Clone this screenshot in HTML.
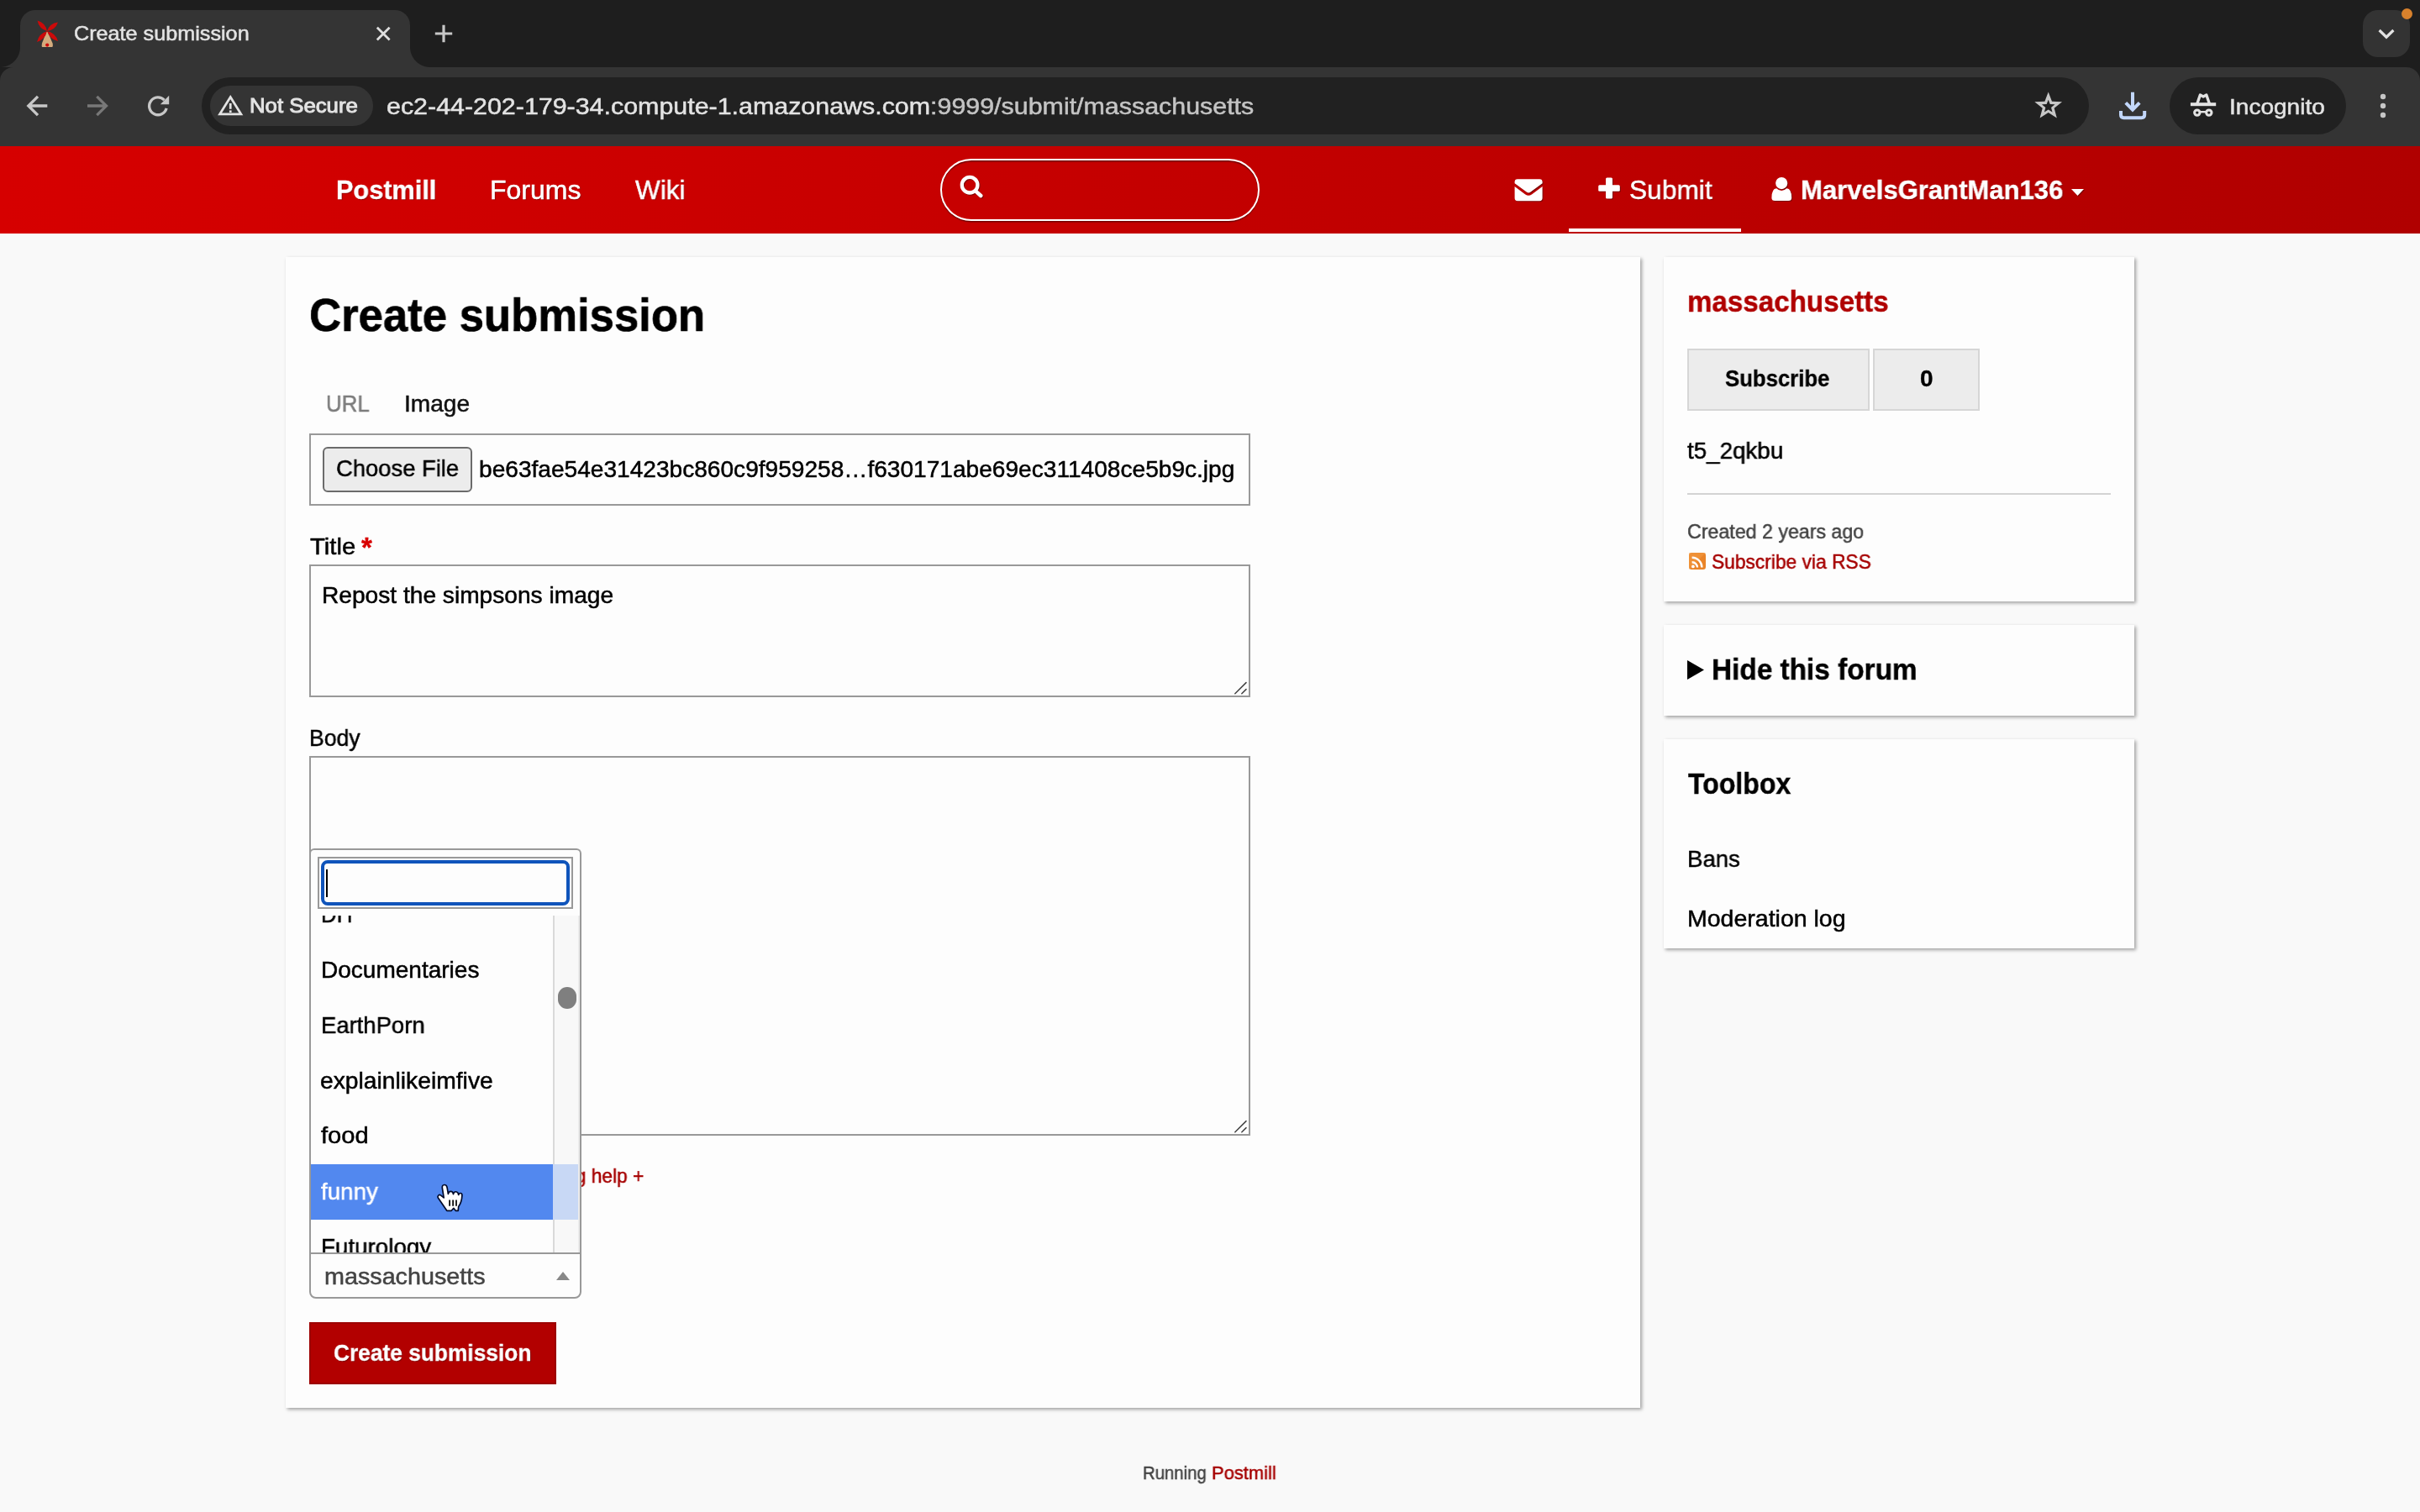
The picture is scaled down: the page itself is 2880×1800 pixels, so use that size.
<!DOCTYPE html>
<html lang="en">
<head>
<meta charset="utf-8">
<title>Create submission</title>
<style>
html,body{margin:0;padding:0}
@media (max-width:1600px){html{zoom:.5}}
body{width:2880px;height:1800px;position:relative;overflow:hidden;background:#f9f9f9;
  font-family:"Liberation Sans",sans-serif;}
.t{position:absolute;transform-origin:0 0;will-change:transform;-webkit-text-stroke:.5px;margin:0;padding:0;line-height:1;white-space:nowrap;font-weight:400;
  font-family:"Liberation Sans",sans-serif;border:0;background:none}
.dim{color:#c4c4c4}
.sh{text-shadow:1px 1px 1px rgba(80,0,0,.6)}
.b{position:absolute;box-sizing:border-box}
svg{position:absolute;overflow:visible}
/* ---------- browser chrome ---------- */
#tabstrip{left:0;top:0;width:2880px;height:100px;background:#1e1e1e}
#toolbar{left:0;top:80px;width:2880px;height:94px;background:#343434;border-radius:16px 16px 0 0}
#tab{left:24px;top:12px;width:464px;height:68px;background:#343434;border-radius:18px 18px 0 0}
#tab:before,#tab:after{content:"";position:absolute;bottom:0;width:24px;height:24px}
#tab:before{left:-24px;background:radial-gradient(circle at 0 0,transparent 23.5px,#343434 24.5px)}
#tab:after{right:-24px;background:radial-gradient(circle at 100% 0,transparent 23.5px,#343434 24.5px)}
#tabsearch{left:2812px;top:12px;width:56px;height:56px;border-radius:18px;background:#333}
#dot{left:2857.5px;top:9.5px;width:13px;height:13px;border-radius:50%;background:#d8812c}
#omni{left:240px;top:92px;width:2246px;height:68px;border-radius:34px;background:#212121}
#chip{left:250px;top:102px;width:194px;height:48px;border-radius:24px;background:#343434}
#incog{left:2582px;top:92px;width:210px;height:68px;border-radius:34px;background:#212121}
/* ---------- site header ---------- */
#site{left:0;top:174px;width:2880px;height:104px;background:linear-gradient(90deg,#d60000,#b00000)}
#search{left:1119px;top:189px;width:380px;height:74px;border:2px solid #fff;border-radius:37px;
  box-shadow:0 1.5px 1px rgba(60,0,0,.6),inset 0 1.5px 1px rgba(60,0,0,.6)}
#active{left:1867px;top:272px;width:205px;height:4px;background:#fff}
/* ---------- cards ---------- */
.card{background:#fdfdfd;box-shadow:2px 2px 4px rgba(0,0,0,.36)}
#main{left:340px;top:306px;width:1612px;height:1370px}
#side1{left:1980px;top:306px;width:560px;height:410px}
#side2{left:1980px;top:744px;width:560px;height:108px}
#side3{left:1980px;top:880px;width:560px;height:249px}
.field{border:2px solid #999;background:#fdfdfd}
#filebox{left:368px;top:516px;width:1120px;height:86px}
#filebtn{left:384px;top:532px;width:178px;height:54px;border:2px solid #6b6b6b;border-radius:6px;background:#ececec}
#titlebox{left:368px;top:672px;width:1120px;height:158px}
#bodybox{left:368px;top:900px;width:1120px;height:452px}
#submitbtn{left:368px;top:1574px;width:294px;height:74px;background:#b20000;border:2px solid #9c0000}
/* dropdown */
#dd{left:368px;top:1010px;width:324px;height:483px;border:2px solid #999;border-bottom:0;border-radius:6px 6px 0 0;background:#fdfdfd}
#ddsearch{left:378px;top:1020px;width:304px;height:62px;border:2px solid #999;background:#fdfdfd}
#ddfocus{left:382px;top:1024px;width:296px;height:54px;border:4px solid #0f54bb;border-radius:8px;background:#fdfdfd}
#caret{left:388px;top:1035px;width:2px;height:33px;background:#000}
#hl{left:370px;top:1386px;width:288px;height:66px;background:#5288ef}
#hl2{left:658px;top:1386px;width:30px;height:66px;background:#c8d8f5}
#track{left:658px;top:1090px;width:32px;height:401px;background:#f8f8f8;border-left:2px solid #d9d9d9;border-right:2px solid #ebebeb}
#thumb{left:664px;top:1175px;width:22px;height:26px;border-radius:11px;background:#7f7f7f}
#selbox{left:368px;top:1491px;width:324px;height:55px;border:2px solid #999;border-radius:0 0 8px 8px;background:#fdfdfd}
#optclip{left:371px;top:1090px;width:287px;height:401px;overflow:hidden}
#optclip .t{margin-left:-371px;margin-top:-1090px}
/* sidebar */
.sbtn{background:#ececec;border:2px solid #d6d6d6}
#subbtn{left:2008px;top:415px;width:217px;height:74px}
#subcnt{left:2229px;top:415px;width:127px;height:74px}
#hr{left:2008px;top:587px;width:504px;height:2px;background:#d3d3d3}
</style>
</head>
<body>
<!-- ======= browser window chrome ======= -->
<div id="browser">
  <div class="b" id="tabstrip"></div>
  <div class="b" id="toolbar"></div>
  <div class="b" id="tab"></div>
  <svg style="left:40px;top:20px" width="34" height="40" viewBox="40 20 34 40" ><path d="M55.2 38 L56.8 38 L62.6 51.5 Q63.4 56 61.8 56 L50.4 56 Q49.2 56 50 51.5Z" fill="#d4ab7d"/><path d="M56 37 Q54.1 27.2 44.5 24.5 Q46.4 34.3 56 37Z" fill="#cc0a0a"/><path d="M56 37 Q65.8 35.8 69 26.5 Q59.2 27.7 56 37Z" fill="#cc0a0a"/><path d="M56 37 Q46.2 40.0 44 50 Q53.8 47.0 56 37Z" fill="#cc0a0a"/><path d="M56 37 Q59.0 46.8 69 49 Q66.0 39.2 56 37Z" fill="#cc0a0a"/><circle cx="56.2" cy="53.6" r="2.1" fill="#cc0a0a"/></svg>
  <span id="tabt" class="t" style="left:87.60px;top:27.68px;font-size:24px;color:#e3e3e3;transform:scaleX(1.0498)">Create submission</span>
  <svg style="left:444px;top:28px" width="24" height="24" viewBox="444 28 24 24" ><path d="M448.8 32.8 L463.6 47.6 M463.6 32.8 L448.8 47.6" stroke="#dedede" stroke-width="2.8" fill="none"/></svg>
  <svg style="left:514px;top:26px" width="28" height="28" viewBox="514 26 28 28" ><path d="M517.8 40 H538.2 M528 29.8 V50.2" stroke="#c7c7c7" stroke-width="3.2" fill="none"/></svg>
  <div class="b" id="tabsearch"></div>
  <svg style="left:2826px;top:30px" width="28" height="20" viewBox="2826 30 28 20" ><path d="M2831.6 36 L2840 44.2 L2848.4 36" stroke="#e3e3e3" stroke-width="3.2" fill="none"/></svg>
  <div class="b" id="dot"></div>
  <svg style="left:28px;top:108px" width="180" height="36" viewBox="28 108 180 36" ><g fill="none" stroke-width="3.3"><path d="M35 126 H56.3 M45 114.8 L33.8 126 L45 137.2" stroke="#c7c7c7"/><path d="M104 126 H125.3 M115.3 114.8 L126.5 126 L115.3 137.2" stroke="#787878"/><path d="M195.6 119.2 A10.4 10.4 0 1 0 198.1 128.9" stroke="#c7c7c7"/></g><path d="M201.2 113.8 V124.2 H190.8Z" fill="#c7c7c7"/></svg>
  <div class="b" id="omni"></div>
  <div class="b" id="chip"></div>
  <svg style="left:256px;top:110px" width="36" height="30" viewBox="256 110 36 30" ><path d="M274.2 115.6 L286.8 135.8 H261.6Z" stroke="#e3e3e3" stroke-width="2.8" fill="none" stroke-linejoin="miter"/><rect x="272.9" y="123" width="2.7" height="6.8" fill="#e3e3e3"/><rect x="272.9" y="131.4" width="2.7" height="2.6" fill="#e3e3e3"/></svg>
  <span id="nsec" class="t" style="left:297.00px;top:113.68px;font-size:24px;color:#e3e3e3;transform:scaleX(1.0727);-webkit-text-stroke:.95px #e3e3e3">Not Secure</span>
<span id="url" class="t" style="left:460.40px;top:113.10px;font-size:28px;color:#e3e3e3;transform:scaleX(1.0855)">ec2-44-202-179-34.compute-1.amazonaws.com<span class="dim">:9999/submit/massachusetts</span></span>
  <svg style="left:2418px;top:106px" width="40" height="38" viewBox="2418 106 40 38" ><path d="M2437.70 109.40 L2441.99 120.69 L2454.06 121.28 L2444.64 128.86 L2447.81 140.52 L2437.70 133.90 L2427.59 140.52 L2430.76 128.86 L2421.34 121.28 L2433.41 120.69Z M2437.70 118.70 L2439.76 124.07 L2445.50 124.37 L2441.03 127.98 L2442.52 133.53 L2437.70 130.40 L2432.88 133.53 L2434.37 127.98 L2429.90 124.37 L2435.64 124.07Z" fill="#c7c7c7" fill-rule="evenodd"/></svg>
  <svg style="left:2518px;top:106px" width="40" height="40" viewBox="2518 106 40 40" ><path d="M2538 109.8 V130.5 M2529.8 122.4 L2538 130.6 L2546.2 122.4 M2524 132 V136.8 Q2524 140.2 2527.4 140.2 H2548.6 Q2552.2 140.2 2552.2 136.8 V132" stroke="#c2d7fb" stroke-width="4" fill="none"/></svg>
  <div class="b" id="incog"></div>
  <svg style="left:2604px;top:106px" width="36" height="38" viewBox="2604 106 36 38" ><g fill="none" stroke="#e3e3e3"><path d="M2606.9 124.2 H2637.2" stroke-width="4"/><path d="M2614.8 123.5 L2618.4 113 L2622.1 115 L2625.8 113 L2629.4 123.5" stroke-width="3.4" stroke-linejoin="round"/><circle cx="2614.8" cy="134.1" r="3.2" stroke-width="3"/><circle cx="2628.8" cy="134.1" r="3.2" stroke-width="3"/><path d="M2618.5 133.2 H2625" stroke-width="2.4"/></g></svg>
  <span id="incogt" class="t" style="left:2653.40px;top:113.99px;font-size:26px;color:#e3e3e3;transform:scaleX(1.0787)">Incognito</span>
  <svg style="left:2830px;top:108px" width="12" height="36" viewBox="2830 108 12 36" ><circle cx="2836" cy="115" r="3.2" fill="#c7c7c7"/><circle cx="2836" cy="126" r="3.2" fill="#c7c7c7"/><circle cx="2836" cy="137" r="3.2" fill="#c7c7c7"/></svg>
</div>
<!-- ======= site header ======= -->
<header>
  <div class="b" id="site"></div>
  <nav>
  <span id="brand" class="t sh" style="left:400.20px;top:209.91px;font-size:32px;font-weight:700;-webkit-text-stroke:.012em;color:#fff;transform:scaleX(0.9587)">Postmill</span>
<span id="forums" class="t sh" style="left:582.60px;top:209.91px;font-size:32px;color:#fff;transform:scaleX(0.9962)">Forums</span>
<span id="wiki" class="t sh" style="left:756.00px;top:209.91px;font-size:32px;color:#fff;transform:scaleX(0.9849)">Wiki</span>
<span id="submit" class="t sh" style="left:1939.40px;top:209.91px;font-size:32px;color:#fff;transform:scaleX(0.9909)">Submit</span>
<span id="user" class="t sh" style="left:2143.00px;top:209.91px;font-size:32px;font-weight:700;-webkit-text-stroke:.012em;color:#fff;transform:scaleX(0.9702)">MarvelsGrantMan136</span>
  </nav>
  <div class="b" id="search"></div>
  <svg style="left:1138px;top:204px" width="36" height="36" viewBox="1138 204 36 36" ><g fill="none" stroke="#fff" style="filter:drop-shadow(1px 1px .6px rgba(80,0,0,.6))"><circle cx="1154.1" cy="220.2" r="9.3" stroke-width="4.3"/><path d="M1161 227.4 L1167.2 233" stroke-width="4.6" stroke-linecap="round"/></g></svg>
  <svg style="left:1798px;top:209px" width="42" height="36" viewBox="1798 209 42 36" ><g fill="#fff" style="filter:drop-shadow(1px 1px .6px rgba(80,0,0,.6))"><path d="M1802.6 216.6 Q1802.6 213.2 1806 213.2 H1832.2 Q1835.6 213.2 1835.6 216.6 V218.2 L1821.6 228.6 Q1819.1 230.4 1816.6 228.6 L1802.6 218.2Z"/><path d="M1802.6 222 L1815.3 231.4 Q1819.1 234 1822.9 231.4 L1835.6 222 V235.8 Q1835.6 239.2 1832.2 239.2 H1806 Q1802.6 239.2 1802.6 235.8Z"/></g></svg>
  <svg style="left:1898px;top:207px" width="34" height="34" viewBox="1898 207 34 34" ><g fill="#fff" style="filter:drop-shadow(1px 1px .6px rgba(80,0,0,.6))"><rect x="1911" y="211.5" width="8" height="25" rx="1.5"/><rect x="1902.2" y="220.2" width="25.6" height="7.6" rx="1.5"/></g></svg>
  <svg style="left:2104px;top:207px" width="34" height="36" viewBox="2104 207 34 36" ><g fill="#fff" style="filter:drop-shadow(1px 1px .6px rgba(80,0,0,.6))"><circle cx="2120.2" cy="218.1" r="7.1"/><path d="M2108.4 235.6 Q2108.4 224.6 2114.2 224.2 Q2116.8 226.9 2120.2 226.9 Q2123.6 226.9 2126.2 224.2 Q2132.2 224.6 2132.2 235.6 Q2132.2 239.1 2128.4 239.1 H2112.2 Q2108.4 239.1 2108.4 235.6Z"/></g></svg>
  <svg style="left:2461px;top:221px" width="24" height="16" viewBox="2461 221 24 16" ><path d="M2465 225 H2480 L2472.5 233Z" fill="#fff" style="filter:drop-shadow(1px 1px .6px rgba(80,0,0,.6))"/></svg>
  <div class="b" id="active"></div>
</header>
<!-- ======= main form ======= -->
<main>
  <div class="b card" id="main"></div>
  <div class="b field" id="filebox"></div>
  <div class="b" id="filebtn"></div>
  <div class="b field" id="titlebox"></div>
  <svg style="left:1464px;top:806px" width="24" height="24" viewBox="1464 806 24 24" ><path d="M1469.8 825.8 L1483 812.6 M1477.8 825.8 L1483 820.6" stroke="#444" stroke-width="1.5" fill="none" stroke-linecap="round"/></svg>
  <div class="b field" id="bodybox"></div>
  <svg style="left:1464px;top:1328px" width="24" height="24" viewBox="1464 1328 24 24" ><path d="M1469.8 1347.8 L1483 1334.6 M1477.8 1347.8 L1483 1342.6" stroke="#444" stroke-width="1.5" fill="none" stroke-linecap="round"/></svg>
  <div class="b" id="submitbtn"></div>
  <h1 id="h1" class="t" style="left:368.40px;top:346.60px;font-size:56px;font-weight:700;-webkit-text-stroke:.012em;color:#000;transform:scaleX(0.9403)">Create submission</h1>
<span id="tab_url" class="t" style="left:388.40px;top:467.30px;font-size:28px;color:#7d7d7d;transform:scaleX(0.9227)">URL</span>
<span id="tab_img" class="t" style="left:481.20px;top:467.10px;font-size:28px;color:#111;transform:scaleX(1.0027)">Image</span>
<span id="choose" class="t" style="left:400.20px;top:544.30px;font-size:28px;color:#000;transform:scaleX(0.9782)">Choose File</span>
<span id="fname" class="t" style="left:570.20px;top:544.60px;font-size:28px;color:#000;transform:scaleX(1.0034)">be63fae54e31423bc860c9f959258…f630171abe69ec311408ce5b9c.jpg</span>
<label id="l_title" class="t" style="left:368.60px;top:637.30px;font-size:28px;color:#000;transform:scaleX(1.0451)">Title</label>
<span id="req" class="t" style="left:429.80px;top:635.07px;font-size:33px;font-weight:700;-webkit-text-stroke:.012em;color:#d80000">*</span>
<span id="title_v" class="t" style="left:383.40px;top:695.10px;font-size:28px;color:#000;transform:scaleX(1.0047)">Repost the simpsons image</span>
<label id="l_body" class="t" style="left:368.00px;top:865.10px;font-size:28px;color:#000;transform:scaleX(0.9501)">Body</label>
<span id="fmt" class="t" style="right:2114.00px;top:1387.76px;font-size:24.5px;color:#a60000;transform:scaleX(0.9291);transform-origin:100% 0">Formatting help +</span>
<button id="btn" class="t sh" style="left:397.40px;top:1597.30px;font-size:28px;font-weight:700;-webkit-text-stroke:.012em;color:#fff;transform:scaleX(0.9395)">Create submission</button>
  <!-- select2 dropdown -->
  <div class="b" id="dd"></div>
  <div class="b" id="ddsearch"></div>
  <div class="b" id="ddfocus"></div>
  <div class="b" id="caret"></div>
  <div class="b" id="track"></div>
  <div class="b" id="hl"></div>
  <div class="b" id="hl2"></div>
  <div class="b" id="thumb"></div>
  <div class="b" id="optclip">
  <span id="o0" class="t" style="left:382.40px;top:1074.60px;font-size:28px;color:#000;transform:scaleX(0.9149)">DIY</span>
<span id="o1" class="t" style="left:382.40px;top:1141.30px;font-size:28px;color:#000;transform:scaleX(1.0005)">Documentaries</span>
<span id="o2" class="t" style="left:382.40px;top:1206.60px;font-size:28px;color:#000;transform:scaleX(0.9805)">EarthPorn</span>
<span id="o3" class="t" style="left:381.40px;top:1272.60px;font-size:28px;color:#000;transform:scaleX(1.0092)">explainlikeimfive</span>
<span id="o4" class="t" style="left:382.40px;top:1338.10px;font-size:28px;color:#000;transform:scaleX(1.0406)">food</span>
<span id="o5" class="t" style="left:382.40px;top:1404.60px;font-size:28px;color:#fff;transform:scaleX(0.9907)">funny</span>
<span id="o6" class="t" style="left:382.40px;top:1470.60px;font-size:28px;color:#000;transform:scaleX(0.9912)">Futurology</span>
  </div>
  <div class="b" id="selbox"></div>
  <span id="sel" class="t" style="left:385.80px;top:1506.30px;font-size:28px;color:#444;transform:scaleX(1.0261)">massachusetts</span>
  <svg style="left:658px;top:1510px" width="24" height="18" viewBox="658 1510 24 18" ><path d="M662 1524 H678 L670 1514Z" fill="#888"/></svg>
  <svg style="left:516px;top:1406px" width="40" height="40" viewBox="516 1406 40 40" ><path d="M528.8 1410.5 C526.6 1410.5 526.2 1412.5 526.3 1414 L528.2 1425.8 L524.4 1422.9 C522.5 1421.6 520.3 1423.6 521.2 1425.8 L531.3 1440.6 Q531.6 1441.3 532.4 1441.3 H537.2 L539.9 1438.3 L542.2 1441.3 H545.2 L545.7 1436.4 Q549.6 1431 549.9 1423 C550 1420 546.6 1419.6 545.7 1422.4 C545.2 1417.8 540.2 1417.6 539.5 1421.6 C539 1417.2 533.9 1417.4 533.4 1421.4 L532.1 1413.6 C531.8 1411.5 530.4 1410.5 528.8 1410.5Z" fill="#fff" stroke="#000a2a" stroke-width="1.7" stroke-linejoin="round"/><path d="M535.1 1428.4 V1435.7 M539.1 1428.4 V1435.7 M543 1428.4 V1435.7" stroke="#000" stroke-width="1.7"/></svg>
</main>
<!-- ======= sidebar ======= -->
<aside>
  <div class="b card" id="side1"></div>
  <div class="b sbtn" id="subbtn"></div>
  <div class="b sbtn" id="subcnt"></div>
  <div class="b" id="hr"></div>
  <svg style="left:2008px;top:656px" width="24" height="24" viewBox="2008 656 24 24" ><rect x="2010" y="658" width="20" height="20" rx="3.2" fill="#ea8428"/><path d="M2010 658 H2030 L2010 678Z" fill="#f6a24a" opacity=".45"/><circle cx="2014.9" cy="674.4" r="1.9" fill="#fff"/><path d="M2013.6 669.2 A6.4 6.4 0 0 1 2020 675.6 M2013.6 663.8 A11.8 11.8 0 0 1 2025.4 675.6" stroke="#fff" stroke-width="2.4" fill="none"/></svg>
  <div class="b card" id="side2"></div>
  <svg style="left:2006px;top:784px" width="24" height="28" viewBox="2006 784 24 28" ><path d="M2008 786 V809 L2028 797.5Z" fill="#000"/></svg>
  <div class="b card" id="side3"></div>
  <h2 id="s_name" class="t" style="left:2007.60px;top:340.77px;font-size:35px;font-weight:700;-webkit-text-stroke:.012em;color:#b00000;transform:scaleX(0.9472)">massachusetts</h2>
<span id="s_sub" class="t" style="left:2053.40px;top:437.30px;font-size:28px;font-weight:700;-webkit-text-stroke:.012em;color:#000;transform:scaleX(0.9187)">Subscribe</span>
<span id="s_cnt" class="t" style="left:2284.60px;top:437.30px;font-size:28px;font-weight:700;-webkit-text-stroke:.012em;color:#000">0</span>
<span id="s_id" class="t" style="left:2008.20px;top:523.10px;font-size:28px;color:#000;transform:scaleX(0.9912)">t5_2qkbu</span>
<span id="s_cr" class="t" style="left:2007.80px;top:621.26px;font-size:24.5px;color:#444;transform:scaleX(0.9468)">Created 2 years ago</span>
<span id="s_rss" class="t" style="left:2037.40px;top:657.26px;font-size:24.5px;color:#a60000;transform:scaleX(0.9291)">Subscribe via RSS</span>
<span id="s_hide" class="t" style="left:2037.40px;top:779.37px;font-size:35px;font-weight:700;-webkit-text-stroke:.012em;color:#000;transform:scaleX(0.9530)">Hide this forum</span>
<h2 id="s_tool" class="t" style="left:2008.80px;top:915.37px;font-size:35px;font-weight:700;-webkit-text-stroke:.012em;color:#000;transform:scaleX(0.9158)">Toolbox</h2>
<span id="s_bans" class="t" style="left:2007.80px;top:1009.30px;font-size:28px;color:#000;transform:scaleX(0.9853)">Bans</span>
<span id="s_mod" class="t" style="left:2007.80px;top:1079.60px;font-size:28px;color:#000;transform:scaleX(1.0181)">Moderation log</span>
</aside>
<footer>
  <span id="f_run" class="t" style="left:1360.40px;top:1743.04px;font-size:22.4px;color:#444;transform:scaleX(0.9081)">Running</span>
<span id="f_pm" class="t" style="left:1442.40px;top:1743.04px;font-size:22.4px;color:#a60000;transform:scaleX(0.9785)">Postmill</span>
</footer>
</body>
</html>
